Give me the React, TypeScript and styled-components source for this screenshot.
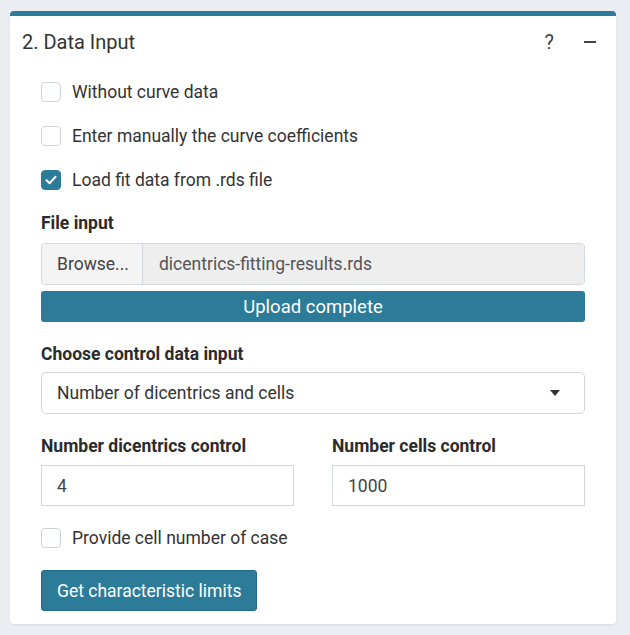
import React, { useState } from 'react';
import styled, { createGlobalStyle } from 'styled-components';

const teal = '#2c7b99';

const GlobalStyle = createGlobalStyle`
    html, body {
        margin: 0;
        padding: 0;
        background: #eaeef3;
        font-family: Roboto, "Liberation Sans", sans-serif;
        color: #333;
    }
`;

const Page = styled.div`
    padding: 11px 14px 11px 10px;
`;

const Card = styled.div`
    width: 606px;
    box-sizing: border-box;
    background: #fff;
    border-top: 5px solid ${teal};
    border-radius: 4px;
    box-shadow: 0 1px 2px rgba(0, 0, 0, 0.08);
`;

const Header = styled.div`
    display: flex;
    align-items: center;
    padding: 12px 20px 12px 12px;
`;

const Title = styled.h3`
    flex: 1;
    margin: 0;
    font-size: 20px;
    font-weight: 400;
    line-height: 28px;
    color: #333;
`;

const Tool = styled.button`
    border: 0;
    background: none;
    padding: 0;
    color: #444;
    font-family: inherit;
    font-size: 20px;
    line-height: 28px;
    cursor: pointer;
`;

const Minus = styled.span`
    display: block;
    width: 12px;
    height: 2px;
    background: #444;
    margin-left: 30px;
`;

const Body = styled.div`
    padding: 14px 31px 13px;
`;

const CheckRow = styled.label<{ $gap?: number }>`
    display: flex;
    align-items: center;
    gap: 11px;
    height: 20px;
    margin-bottom: ${(p) => p.$gap ?? 24}px;
    font-size: 17.5px;
    cursor: pointer;
`;

const Box = styled.span<{ $on?: boolean }>`
    display: flex;
    align-items: center;
    justify-content: center;
    width: 20px;
    height: 20px;
    box-sizing: border-box;
    border-radius: 4px;
    border: 1px solid ${(p) => (p.$on ? teal : '#cfd3d8')};
    background: ${(p) => (p.$on ? teal : '#fff')};
`;

const Label = styled.div<{ $mb?: number }>`
    font-size: 17.5px;
    font-weight: 700;
    line-height: 24px;
    margin-bottom: ${(p) => p.$mb ?? 8}px;
    color: #2b2b2b;
`;

const FileRow = styled.div`
    display: flex;
    height: 42px;
    box-sizing: border-box;
    border: 1px solid #d4d9df;
    border-radius: 4px;
    overflow: hidden;
    font-size: 17.5px;
`;

const Browse = styled.div`
    display: flex;
    align-items: center;
    padding: 0 15px;
    width: 101px;
    box-sizing: border-box;
    background: #f4f4f4;
    border-right: 1px solid #d4d9df;
    color: #444;
`;

const FileName = styled.div`
    flex: 1;
    display: flex;
    align-items: center;
    padding: 0 16px;
    background: #eeeeee;
    color: #555;
`;

const Progress = styled.div`
    margin-top: 6px;
    height: 31px;
    border-radius: 3px;
    background: ${teal};
    color: #fff;
    font-size: 18.5px;
    display: flex;
    align-items: center;
    justify-content: center;
    margin-bottom: 20px;
`;

const Select = styled.div`
    display: flex;
    align-items: center;
    justify-content: space-between;
    height: 42px;
    box-sizing: border-box;
    padding: 0 24px 0 15px;
    border: 1px solid #d4d6d9;
    border-radius: 5px;
    font-size: 17.5px;
    color: #333;
    margin-bottom: 20px;
`;

const Caret = styled.span`
    width: 0;
    height: 0;
    border-left: 5px solid transparent;
    border-right: 5px solid transparent;
    border-top: 6px solid #333;
`;

const Columns = styled.div`
    display: grid;
    grid-template-columns: 1fr 1fr;
    column-gap: 38px;
    margin-bottom: 22px;
`;

const NumInput = styled.input`
    display: block;
    width: 100%;
    height: 41px;
    box-sizing: border-box;
    padding: 0 15px;
    border: 1px solid #d2d7de;
    border-radius: 0;
    font-family: inherit;
    font-size: 17.5px;
    color: #444;
    outline: none;
`;

const ActionButton = styled.button`
    height: 41px;
    padding: 0 15px;
    border: 1px solid #24698a;
    border-radius: 3px;
    background: ${teal};
    color: #fff;
    font-family: inherit;
    font-size: 17.5px;
    cursor: pointer;
`;

const Check = () => (
    <svg width="14" height="14" viewBox="0 0 14 14" fill="none">
        <path d="M2.5 7.2 L5.6 10.2 L11.5 3.8" stroke="#fff" strokeWidth="2" strokeLinecap="round" strokeLinejoin="round" />
    </svg>
);

const CheckItem: React.FC<{ label: string; initial?: boolean; gap?: number }> = ({ label, initial, gap }) => {
    const [on, setOn] = useState(!!initial);
    return (
        <CheckRow $gap={gap} onClick={() => setOn(!on)}>
            <Box $on={on}>{on && <Check />}</Box>
            {label}
        </CheckRow>
    );
};

const App: React.FC = () => {
    const [dic, setDic] = useState('4');
    const [cells, setCells] = useState('1000');

    return (
        <Page>
            <GlobalStyle />
            <Card>
                <Header>
                    <Title>2. Data Input</Title>
                    <Tool>?</Tool>
                    <Minus />
                </Header>
                <Body>
                    <CheckItem label="Without curve data" />
                    <CheckItem label="Enter manually the curve coefficients" />
                    <CheckItem label="Load fit data from .rds file" initial gap={21} />

                    <Label>File input</Label>
                    <FileRow>
                        <Browse>Browse...</Browse>
                        <FileName>dicentrics-fitting-results.rds</FileName>
                    </FileRow>
                    <Progress>Upload complete</Progress>

                    <Label $mb={6}>Choose control data input</Label>
                    <Select>
                        Number of dicentrics and cells
                        <Caret />
                    </Select>

                    <Columns>
                        <div>
                            <Label $mb={7}>Number dicentrics control</Label>
                            <NumInput value={dic} onChange={(e) => setDic(e.target.value)} />
                        </div>
                        <div>
                            <Label $mb={7}>Number cells control</Label>
                            <NumInput value={cells} onChange={(e) => setCells(e.target.value)} />
                        </div>
                    </Columns>

                    <CheckItem label="Provide cell number of case" gap={22} />

                    <ActionButton>Get characteristic limits</ActionButton>
                </Body>
            </Card>
        </Page>
    );
};

export default App;
